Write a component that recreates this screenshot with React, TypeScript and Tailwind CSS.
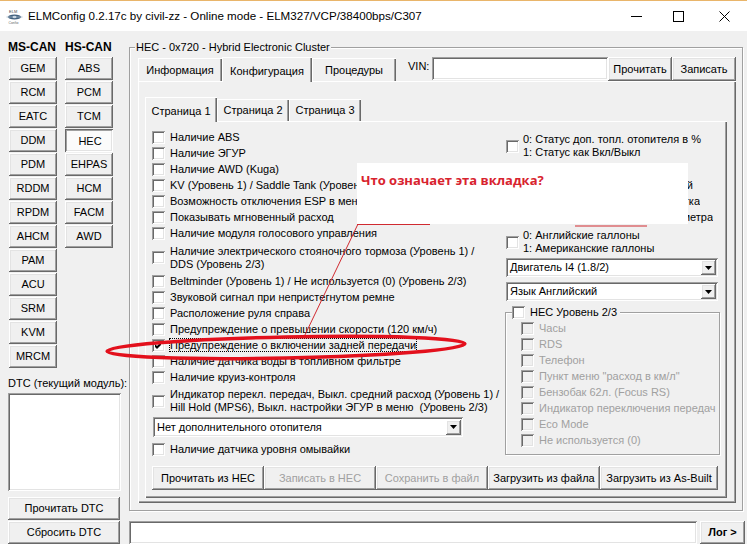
import React from "react";

const RAISED =
  "shadow-[inset_-1px_-1px_0_#696969,inset_1px_1px_0_#ffffff,inset_-2px_-2px_0_#a0a0a0,inset_2px_2px_0_#e3e3e3]";
const PRESSED =
  "shadow-[inset_1px_1px_0_#696969,inset_-1px_-1px_0_#ffffff,inset_2px_2px_0_#a0a0a0,inset_-2px_-2px_0_#e3e3e3]";
const SUNKEN =
  "shadow-[inset_1px_1px_0_#a0a0a0,inset_-1px_-1px_0_#ffffff,inset_2px_2px_0_#696969,inset_-2px_-2px_0_#e3e3e3]";
const TAB = "shadow-[inset_1px_1px_0_#ffffff,inset_-1px_0_0_#696969,inset_-2px_0_0_#a0a0a0]";
const PANEL = "shadow-[inset_1px_1px_0_#ffffff,inset_-1px_-1px_0_#696969,inset_-2px_-2px_0_#a0a0a0]";

function Check({ checked = false, disabled = false }: { checked?: boolean; disabled?: boolean }) {
  return (
    <div className={`relative w-[13px] h-[13px] shrink-0 ${disabled ? "bg-[#f0f0f0]" : "bg-white"} ${SUNKEN}`}>
      {checked && (
        <svg className="absolute left-0 top-0" width="13" height="13" viewBox="0 0 13 13">
          <path d="M3 5 L5 7 L9 3 L9 6 L5 10 L3 8 Z" fill="#000" />
        </svg>
      )}
    </div>
  );
}

function Row({
  children,
  checked = false,
  focus = false,
  disabled = false,
}: {
  children: React.ReactNode;
  checked?: boolean;
  focus?: boolean;
  disabled?: boolean;
}) {
  return (
    <div className="h-[16px] flex items-center">
      <Check checked={checked} disabled={disabled} />
      {focus ? (
        <span className="ml-[4px] border border-dotted border-black leading-[12px] whitespace-nowrap">{children}</span>
      ) : (
        <span className={`ml-[5px] whitespace-nowrap ${disabled ? "text-[#a0a0a0]" : ""}`}>{children}</span>
      )}
    </div>
  );
}

function ModBtn({ label, active = false }: { label: string; active?: boolean }) {
  return (
    <div
      className={`w-[48px] h-[23px] flex items-center justify-center ${
        active ? `bg-[#fbfbfb] pt-[2px] pl-[2px] ${PRESSED}` : `bg-[#f0f0f0] ${RAISED}`
      }`}
    >
      {label}
    </div>
  );
}

function Btn({ children, cls, disabled = false }: { children: React.ReactNode; cls: string; disabled?: boolean }) {
  return (
    <div
      className={`${cls} shrink-0 flex items-center justify-center whitespace-nowrap bg-[#f0f0f0] ${RAISED} ${
        disabled ? "text-[#a0a0a0]" : ""
      }`}
    >
      {children}
    </div>
  );
}

function Select({ value, cls }: { value: string; cls: string }) {
  return (
    <div className={`${cls} bg-white ${SUNKEN} flex items-center pl-[4px] pr-[2px]`}>
      <span className="flex-1 whitespace-nowrap">{value}</span>
      <div className={`w-[15px] h-[15px] bg-[#f0f0f0] ${RAISED} flex items-center justify-center`}>
        <svg width="7" height="4" viewBox="0 0 7 4">
          <path d="M0 0H7L3.5 4Z" fill="#000" />
        </svg>
      </div>
    </div>
  );
}

function Tab({ children, selected = false, w }: { children: React.ReactNode; selected?: boolean; w: string }) {
  return (
    <div
      className={`${w} flex items-center justify-center whitespace-nowrap bg-[#f0f0f0] ${TAB} ${
        selected ? "relative z-10 h-[25px] -mb-px pt-[3px]" : "h-[23px] pt-[2px]"
      }`}
    >
      {children}
    </div>
  );
}

function InnerTab({ children, selected = false }: { children: React.ReactNode; selected?: boolean }) {
  return (
    <div
      className={`w-[72px] flex items-center justify-center whitespace-nowrap bg-[#f0f0f0] ${TAB} ${
        selected ? "relative z-10 h-[25px] -mb-px pt-[3px]" : "h-[22px]"
      }`}
    >
      {children}
    </div>
  );
}

function TitleBar() {
  return (
    <div className="h-[31px] bg-white border-t border-[#e9b56a] flex items-center">
      <svg className="ml-[6px] shrink-0" width="17" height="15" viewBox="0 0 17 15">
        <text x="3" y="4" fontSize="4" fill="#444" fontFamily="Liberation Sans">ELM</text>
        <ellipse cx="8.5" cy="8" rx="6.5" ry="2.6" fill="#40607e" />
        <path d="M0.5 8 H16.5" stroke="#9fb3c4" strokeWidth="0.8" />
        <ellipse cx="8.5" cy="8" rx="2" ry="1.2" fill="#c9d6e2" />
        <text x="2.5" y="14.5" fontSize="3.4" fill="#666" fontFamily="Liberation Sans">Config</text>
      </svg>
      <span className="ml-[5px] mb-[1px] text-[11.6px] whitespace-nowrap">
        ELMConfig 0.2.17c by civil-zz - Online mode - ELM327/VCP/38400bps/C307
      </span>
      <div className="ml-auto flex h-full">
        <div className="w-[46px] h-full flex items-center justify-center pl-[8px]">
          <svg width="11" height="1" viewBox="0 0 11 1">
            <path d="M0 0.5H11" stroke="#000" strokeWidth="1" />
          </svg>
        </div>
        <div className="w-[46px] h-full flex items-center justify-center">
          <svg width="11" height="11" viewBox="0 0 11 11">
            <rect x="0.5" y="0.5" width="10" height="10" fill="none" stroke="#000" strokeWidth="1" />
          </svg>
        </div>
        <div className="w-[46px] h-full flex items-center justify-center">
          <svg width="11" height="11" viewBox="0 0 11 11">
            <path d="M0.5 0.5L10.5 10.5M10.5 0.5L0.5 10.5" stroke="#000" strokeWidth="1" />
          </svg>
        </div>
      </div>
    </div>
  );
}

function LeftCol() {
  const ms = ["GEM", "RCM", "EATC", "DDM", "PDM", "RDDM", "RPDM", "AHCM", "PAM", "ACU", "SRM", "KVM", "MRCM"];
  const hs = ["ABS", "PCM", "TCM", "HEC", "EHPAS", "HCM", "FACM", "AWD"];
  return (
    <div className="w-[129px] shrink-0 flex flex-col pl-[8px]">
      <div className="mt-[10px] h-[13px] flex items-center font-bold text-[12px]">
        <span className="w-[57px]">MS-CAN</span>
        <span>HS-CAN</span>
      </div>
      <div className="mt-[3px] flex gap-[8px] pl-[1px]">
        <div className="flex flex-col gap-[1px]">
          {ms.map((m) => (
            <ModBtn key={m} label={m} />
          ))}
        </div>
        <div className="flex flex-col gap-[1px] self-start">
          {hs.map((m) => (
            <ModBtn key={m} label={m} active={m === "HEC"} />
          ))}
        </div>
      </div>
      <div className="mt-[9px] whitespace-nowrap">DTC (текущий модуль):</div>
      <div className={`mt-[3px] w-[113px] h-[98px] bg-white ${SUNKEN}`} />
      <Btn cls="mt-[6px] w-[112px] h-[23px]">Прочитать DTC</Btn>
      <Btn cls="mt-[1px] w-[112px] h-[23px]">Сбросить DTC</Btn>
    </div>
  );
}

function PageContent() {
  return (
    <div className={`w-[582px] h-[377px] ${PANEL} pl-[7px] pt-[8px]`}>
      <div className="flex">
        {/* left list */}
        <div className="w-[353px] shrink-0 flex flex-col">
          <Row>Наличие ABS</Row>
          <Row>Наличие ЭГУР</Row>
          <Row>Наличие AWD (Kuga)</Row>
          <Row>KV (Уровень 1) / Saddle Tank (Уровень 2/3)</Row>
          <Row>Возможность отключения ESP в меню</Row>
          <Row>Показывать мгновенный расход</Row>
          <Row>Наличие модуля голосового управления</Row>
          <div className="h-[32px] flex items-center">
            <Check />
            <div className="ml-[5px] pt-[2px] leading-[13px] whitespace-nowrap">
              Наличие электрического стояночного тормоза (Уровень 1) /
              <br />
              DDS (Уровень 2/3)
            </div>
          </div>
          <Row>Beltminder (Уровень 1) / Не используется (0) (Уровень 2/3)</Row>
          <Row>Звуковой сигнал при непристегнутом ремне</Row>
          <Row>Расположение руля справа</Row>
          <Row>Предупреждение о превышении скорости (120 км/ч)</Row>
          <Row checked focus>
            Предупреждение о включении задней передачи
          </Row>
          <Row>Наличие датчика воды в топливном фильтре</Row>
          <Row>Наличие круиз-контроля</Row>
          <div className="h-[32px] flex items-center">
            <Check />
            <div className="ml-[5px] leading-[13px] whitespace-nowrap">
              Индикатор перекл. передач, Выкл. средний расход (Уровень 1) /
              <br />
              Hill Hold (MPS6), Выкл. настройки ЭГУР в меню&nbsp; (Уровень 2/3)
            </div>
          </div>
          <Select value="Нет дополнительного отопителя" cls="ml-[1px] w-[310px] h-[20px]" />
          <div className="mt-[4px]">
            <Row>Наличие датчика уровня омывайки</Row>
          </div>
        </div>

        {/* right list */}
        <div className="w-[215px] shrink-0 flex flex-col pt-[4px]">
          <div className="h-[26px] flex items-center pl-[1px]">
            <Check />
            <div className="ml-[4px] leading-[13px] whitespace-nowrap">
              0: Статус доп. топл. отопителя в %
              <br />
              1: Статус как Вкл/Выкл
            </div>
          </div>
          <div className="mt-[2px] pl-[18px] flex flex-col">
            <div className="h-[16px] flex items-center whitespace-nowrap">0: Отображать расход</div>
            <div className="h-[16px] w-[170px] flex items-center justify-end overflow-hidden whitespace-nowrap">
              <span>1: Индикатор охлаждающей</span>
            </div>
            <div className="h-[16px] w-[177px] flex items-center justify-end overflow-hidden whitespace-nowrap">
              <span>0: Стандартная подсветка</span>
            </div>
            <div className="h-[16px] w-[190px] flex items-center justify-end overflow-hidden whitespace-nowrap">
              <span>1: Показания одометра</span>
            </div>
          </div>
          <div className="mt-[4px] h-[26px] flex items-center pl-[1px]">
            <Check />
            <div className="ml-[4px] leading-[13px] whitespace-nowrap">
              0: Английские галлоны
              <br />
              1: Американские галлоны
            </div>
          </div>
          <Select value="Двигатель I4 (1.8/2)" cls="mt-[3px] ml-[1px] w-[212px] h-[19px]" />
          <Select value="Язык Английский" cls="mt-[5px] ml-[1px] w-[212px] h-[19px]" />
          <div className="relative mt-[11px] h-[143px] border border-[#a0a0a0] shadow-[inset_1px_1px_0_#ffffff,1px_1px_0_#ffffff] pt-[7px] pl-[15px]">
            <div className="absolute left-[6px] -top-[7px] flex items-center bg-[#f0f0f0] pr-[3px]">
              <Check />
              <span className="ml-[5px] whitespace-nowrap">HEC Уровень 2/3</span>
            </div>
            <Row disabled>Часы</Row>
            <Row disabled>RDS</Row>
            <Row disabled>Телефон</Row>
            <Row disabled>Пункт меню "расход в км/л"</Row>
            <Row disabled>Бензобак 62л. (Focus RS)</Row>
            <Row disabled>Индикатор переключения передач</Row>
            <Row disabled>Eco Mode</Row>
            <Row disabled>Не используется (0)</Row>
          </div>
        </div>
      </div>

      <div className="mt-[9px] flex">
        <Btn cls="w-[112px] h-[24px]">Прочитать из HEC</Btn>
        <Btn cls="w-[112px] h-[24px]" disabled>
          Записать в HEC
        </Btn>
        <Btn cls="w-[112px] h-[24px]" disabled>
          Сохранить в файл
        </Btn>
        <Btn cls="w-[112px] h-[24px]">Загрузить из файла</Btn>
        <Btn cls="w-[118px] h-[24px]">Загрузить из As-Built</Btn>
      </div>
    </div>
  );
}

function MainCol() {
  return (
    <div className="flex-1 flex flex-col">
      <div className="relative mt-[16px] w-[614px] h-[464px] border border-[#a0a0a0] shadow-[inset_1px_1px_0_#ffffff,1px_1px_0_#ffffff]">
        <div className="absolute left-[5px] -top-[7px] px-[1px] bg-[#f0f0f0] whitespace-nowrap">
          HEC - 0x720 - Hybrid Electronic Cluster
        </div>
        <div className="ml-[8px] mt-[9px] w-[598px]">
          <div className="flex items-end h-[24px]">
            <Tab w="w-[84px]">Информация</Tab>
            <Tab w="w-[90px]" selected>
              Конфигурация
            </Tab>
            <Tab w="w-[84px]">Процедуры</Tab>
            <div className="self-start ml-[12px] mt-[3px] w-[24px]">VIN:</div>
            <div className={`self-start w-[176px] h-[23px] bg-white ${SUNKEN}`} />
            <div className="self-start flex">
              <Btn cls="w-[64px] h-[24px]">Прочитать</Btn>
              <Btn cls="w-[64px] h-[24px]">Записать</Btn>
            </div>
          </div>
          <div className={`h-[422px] ${PANEL} pl-[7px] pt-[16px]`}>
            <div className="flex items-end h-[24px]">
              <InnerTab selected>Страница 1</InnerTab>
              <InnerTab>Страница 2</InnerTab>
              <InnerTab>Страница 3</InnerTab>
            </div>
            <PageContent />
          </div>
        </div>
      </div>
      <div className="mt-[10px] flex h-[23px]">
        <div className={`w-[568px] h-[23px] bg-white ${SUNKEN}`} />
        <Btn cls="ml-[3px] w-[45px] h-[23px] font-bold">Лог &gt;</Btn>
      </div>
    </div>
  );
}

function Annotation() {
  return (
    <>
      <div className="absolute left-[357px] top-[163px] w-[331px] h-[61px] bg-white pl-[4px] pt-[9px]">
        <span className="font-['Open_Sans',sans-serif] font-bold text-[13px] leading-[17px] text-[#d8232e] whitespace-nowrap">
          Что означает эта вкладка?
        </span>
      </div>
      <svg className="absolute left-0 top-0 pointer-events-none" width="747" height="544" viewBox="0 0 747 544">
        <path d="M357 224.5 H430" stroke="#d02a30" strokeWidth="1.2" fill="none" />
        <path d="M575 226 H647" stroke="#d02a30" strokeWidth="1.2" fill="none" />
        <path d="M358 224 L304 337" stroke="#d02a30" strokeWidth="1" fill="none" />
        <ellipse
          cx="286"
          cy="347.5"
          rx="179"
          ry="10.5"
          transform="rotate(-1.2 286 347.5)"
          stroke="#e3101c"
          strokeWidth="3.5"
          fill="none"
        />
      </svg>
    </>
  );
}

export default function App() {
  return (
    <div className="relative w-[747px] h-[544px] overflow-hidden bg-[#f0f0f0] text-black text-[11px] leading-[13px] font-['Liberation_Sans',Arial,sans-serif]">
      <TitleBar />
      <div className="flex h-[513px]">
        <LeftCol />
        <MainCol />
      </div>
      <Annotation />
    </div>
  );
}
